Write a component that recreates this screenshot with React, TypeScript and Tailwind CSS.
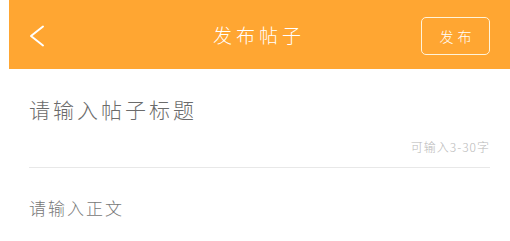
const font = {fontFamily: '"Noto Sans CJK SC", "Noto Sans", sans-serif'};

function BackIcon() {
    return (
        <svg width="16" height="22" viewBox="0 0 16 22" fill="none">
            <polyline points="14,1.5 2,11 14,20.5" stroke="white" strokeWidth="2" strokeLinecap="round" strokeLinejoin="round"/>
        </svg>
    );
}

function App() {
    return (
        <div className="w-[510px] h-[241px] bg-white pl-[9px]" style={font}>
            {/* Header */}
            <header className="h-[69px] bg-[#ffa632] flex items-center justify-between pl-[20px] pr-5">
                <div className="mt-[3px]"><BackIcon/></div>
                <h1 className="text-[19px] font-light text-white tracking-[4px] pl-[52px] mt-[2px]">发布帖子</h1>
                <button className="mt-[3px] w-[69px] h-[38px] border-[1.5px] border-[#fff3d9] rounded-[5px] text-white text-[14px] font-light tracking-[4px] pl-[4px] flex items-center justify-center">
                    发布
                </button>
            </header>

            {/* Title input */}
            <section className="px-5">
                <div className="pt-[25px] text-[21px] font-light text-[#6b6b6b] tracking-[3px] leading-[30px]">
                    请输入帖子标题
                </div>
                <div className="mt-[16px] text-right text-[12px] font-light text-[#b8b8b8] tracking-[1px] leading-[14px]">
                    可输入3-30字
                </div>
                <div className="mt-[13px] h-px bg-[#e8e8e8]"/>
                <div className="pt-[29px] text-[17px] font-light text-[#777] tracking-[2px] leading-[22px]">
                    请输入正文
                </div>
            </section>
        </div>
    );
}

export default App;
